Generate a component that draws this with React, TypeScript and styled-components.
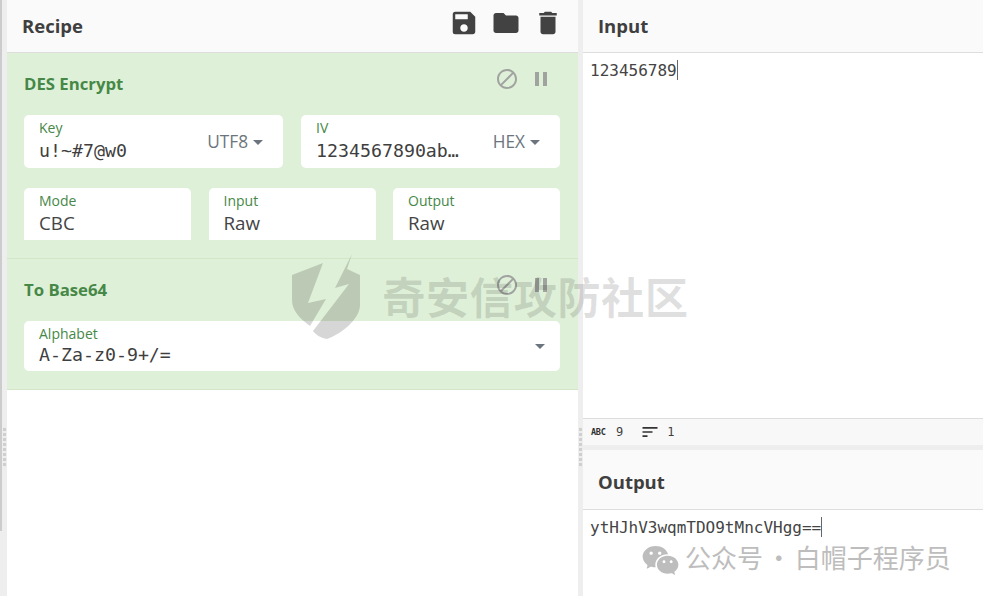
import React from "react";
import styled, { createGlobalStyle } from "styled-components";
import { MdSave, MdFolder, MdDelete, MdBlock, MdPause, MdSort } from "react-icons/md";
import { RiWechatFill } from "react-icons/ri";

const Global = createGlobalStyle`
  html, body { margin: 0; padding: 0; background: #fff; }
  #root { width: 983px; height: 596px; overflow: hidden; }
`;

const Page = styled.div`
  position: relative;
  width: 983px;
  height: 596px;
  display: flex;
  background: #eeeeee;
  font-family: "Open Sans", "Noto Sans CJK SC", sans-serif;
  overflow: hidden;
`;

const Rail = styled.div`
  width: 7px;
  flex: none;
  position: relative;
`;

const Thumb = styled.div`
  width: 2px;
  height: 531px;
  background: #cccccc;
`;

const Grip = styled.div`
  position: absolute;
  top: 428px;
  left: ${(p: { $left: number }) => p.$left}px;
  width: 3px;
  height: 38px;
  background: repeating-linear-gradient(to bottom, #cfcfcf 0, #cfcfcf 3px, transparent 3px, transparent 5px);
`;

const Recipe = styled.section`
  width: 571px;
  flex: none;
  background: #fff;
  display: flex;
  flex-direction: column;
`;

const Head = styled.header<{ $h: number; $pt?: number }>`
  height: ${(p) => p.$h}px;
  flex: none;
  box-sizing: border-box;
  display: flex;
  align-items: center;
  justify-content: space-between;
  background: #fafafa;
  border-bottom: 1px solid #dddddd;
  padding: ${(p) => p.$pt ?? 0}px 0 0 15px;
`;

const HeadTitle = styled.h2`
  margin: 0 0 1px;
  font-size: 18.5px;
  font-weight: 700;
  color: #3f3f3f;
`;

const Tools = styled.div`
  display: flex;
  gap: 12px;
  padding: 0 15px 6px 0;
  color: #424242;
  font-size: 30px;
  line-height: 0;
`;

const Op = styled.div<{ $h: number }>`
  height: ${(p) => p.$h}px;
  flex: none;
  box-sizing: border-box;
  background: #dff0d8;
  border-bottom: 1px solid #d3e6c8;
  padding: 0 18px 0 17px;
`;

const OpHead = styled.div<{ $h: number }>`
  height: ${(p) => p.$h}px;
  display: flex;
  align-items: center;
  justify-content: space-between;
`;

const OpTitle = styled.h3`
  margin: 0 0 2px;
  font-size: 16.75px;
  font-weight: 700;
  color: #468847;
`;

const OpIcons = styled.div`
  display: flex;
  gap: 10px;
  color: #a0a3a0;
  font-size: 24px;
  line-height: 0;
  margin: 0 7px 10px 0;
`;

const Row = styled.div<{ $gap: number; $mt?: number }>`
  display: flex;
  gap: ${(p) => p.$gap}px;
  margin-top: ${(p) => p.$mt ?? 0}px;
`;

const Card = styled.div<{ $h: number; $square?: boolean }>`
  position: relative;
  flex: 1 1 0;
  min-width: 0;
  height: ${(p) => p.$h}px;
  box-sizing: border-box;
  background: #fff;
  border-radius: ${(p) => (p.$square ? "5px 5px 0 0" : "5px")};
  padding: 5px 15px 0;
`;

const Label = styled.div`
  font-size: 14px;
  line-height: 16px;
  color: #468847;
`;

const MonoValue = styled.div<{ $mt?: number }>`
  font-family: "DejaVu Sans Mono", monospace;
  font-size: 18.25px;
  line-height: 24px;
  margin-top: ${(p) => p.$mt ?? 3}px;
  color: #3f3f3f;
  white-space: nowrap;
`;

const TextValue = styled.div`
  font-size: 18.75px;
  line-height: 26px;
  margin-top: 1px;
  color: #444;
`;

const Selector = styled.div`
  position: absolute;
  right: 20px;
  top: 15px;
  display: flex;
  align-items: center;
  gap: 5px;
  font-size: 17.25px;
  line-height: 24px;
  color: #6c757d;
`;

const Caret = styled.span`
  width: 0;
  height: 0;
  border-left: 5px solid transparent;
  border-right: 5px solid transparent;
  border-top: 5px solid #6c757d;
`;

const AlphabetCaret = styled(Caret)`
  position: absolute;
  right: 15px;
  top: 23px;
`;

const Right = styled.section`
  width: 400px;
  margin-left: 5px;
  flex: none;
  display: flex;
  flex-direction: column;
`;

const Pane = styled.div<{ $h?: number }>`
  background: #fff;
  flex: ${(p) => (p.$h ? `0 0 ${p.$h}px` : "1 1 0")};
  box-sizing: border-box;
  padding: 7px 7px;
  font-family: "DejaVu Sans Mono", monospace;
  font-size: 16px;
  line-height: 21px;
  color: #444;
  white-space: pre;
`;

const Cursor = styled.span`
  display: inline-block;
  width: 1px;
  height: 20px;
  background: #666;
  vertical-align: -4px;
`;

const Status = styled.div`
  height: 27px;
  flex: none;
  box-sizing: border-box;
  display: flex;
  align-items: center;
  background: #f8f8f8;
  border-top: 1px solid #dddddd;
  padding-left: 8px;
  font-family: "DejaVu Sans Mono", monospace;
  font-size: 12px;
  color: #3f3f3f;
`;

const AbcGlyph = styled.span`
  font-family: "DejaVu Sans Mono", monospace;
  font-weight: 700;
  font-size: 8.5px;
  letter-spacing: -0.3px;
  width: 17px;
  margin-right: 8px;
  text-transform: uppercase;
  color: #2f2f2f;
`;

const SortIcon = styled(MdSort)`
  font-size: 20px;
  margin: 0 7px 0 17px;
  color: #333;
`;

const HGap = styled.div`
  height: 5px;
  flex: none;
  background: #eeeeee;
`;

const Shield = styled.svg`
  position: absolute;
  left: 285px;
  top: 248px;
  pointer-events: none;
`;

const Mark = styled.div`
  position: absolute;
  left: 382px;
  top: 268px;
  font-family: "Noto Sans CJK SC", sans-serif;
  font-size: 43.5px;
  line-height: 56px;
  font-weight: 700;
  letter-spacing: 0.3px;
  color: rgba(0, 0, 0, 0.12);
  white-space: nowrap;
  pointer-events: none;
`;

const Wechat = styled.div`
  position: absolute;
  left: 641px;
  top: 539px;
  display: flex;
  align-items: center;
  gap: 5px;
  pointer-events: none;
`;

const WechatText = styled.span`
  color: #bdbdbd;
  font-family: "Noto Sans CJK SC", sans-serif;
  font-size: 26px;
  line-height: 36px;
  word-spacing: -3px;
  white-space: nowrap;
  margin-bottom: 6px;
`;

const WechatIcon = styled(RiWechatFill)`
  font-size: 39px;
  color: #bdbdbd;
`;

export default function App() {
  return (
    <Page>
      <Global />
      <Rail>
        <Thumb />
        <Grip $left={3} />
      </Rail>
      <Recipe>
        <Head $h={53}>
          <HeadTitle>Recipe</HeadTitle>
          <Tools>
            <MdSave />
            <MdFolder />
            <MdDelete />
          </Tools>
        </Head>
        <Op $h={206}>
          <OpHead $h={62}>
            <OpTitle>DES Encrypt</OpTitle>
            <OpIcons>
              <MdBlock />
              <MdPause />
            </OpIcons>
          </OpHead>
          <Row $gap={18}>
            <Card $h={53}>
              <Label>Key</Label>
              <MonoValue>u!~#7@w0</MonoValue>
              <Selector>
                UTF8
                <Caret />
              </Selector>
            </Card>
            <Card $h={53}>
              <Label>IV</Label>
              <MonoValue>1234567890ab…</MonoValue>
              <Selector>
                HEX
                <Caret />
              </Selector>
            </Card>
          </Row>
          <Row $gap={17.5} $mt={20}>
            <Card $h={52} $square>
              <Label>Mode</Label>
              <TextValue>CBC</TextValue>
            </Card>
            <Card $h={52} $square>
              <Label>Input</Label>
              <TextValue>Raw</TextValue>
            </Card>
            <Card $h={52} $square>
              <Label>Output</Label>
              <TextValue>Raw</TextValue>
            </Card>
          </Row>
        </Op>
        <Op $h={131}>
          <OpHead $h={62}>
            <OpTitle>To Base64</OpTitle>
            <OpIcons>
              <MdBlock />
              <MdPause />
            </OpIcons>
          </OpHead>
          <Row $gap={18}>
            <Card $h={50}>
              <Label>Alphabet</Label>
              <MonoValue $mt={1}>A-Za-z0-9+/=</MonoValue>
              <AlphabetCaret />
            </Card>
          </Row>
        </Op>
      </Recipe>
      <Grip $left={579} />
      <Right>
        <Head $h={53}>
          <HeadTitle>Input</HeadTitle>
        </Head>
        <Pane>
          123456789
          <Cursor />
        </Pane>
        <Status>
          <AbcGlyph>abc</AbcGlyph>9
          <SortIcon />1
        </Status>
        <HGap />
        <Head $h={60} $pt={4}>
          <HeadTitle>Output</HeadTitle>
        </Head>
        <Pane $h={86}>
          ytHJhV3wqmTDO9tMncVHgg==
          <Cursor />
        </Pane>
      </Right>
      <Shield width="85" height="100" viewBox="0 0 85 100" fill="rgba(0,0,0,0.16)">
        <path d="M7 27 L38 15 L23 55 L41 51 L25 78 C14 70 7 62 7 52 Z" />
        <path d="M67 6 L62 21 L75 27 V58 C74 72 56 86 42 91 C36 90 31 87 28 83 L18 96 L64 36 L50 40 Z" />
      </Shield>
      <Mark>奇安信攻防社区</Mark>
      <Wechat>
        <WechatIcon />
        <WechatText>公众号 · 白帽子程序员</WechatText>
      </Wechat>
    </Page>
  );
}
